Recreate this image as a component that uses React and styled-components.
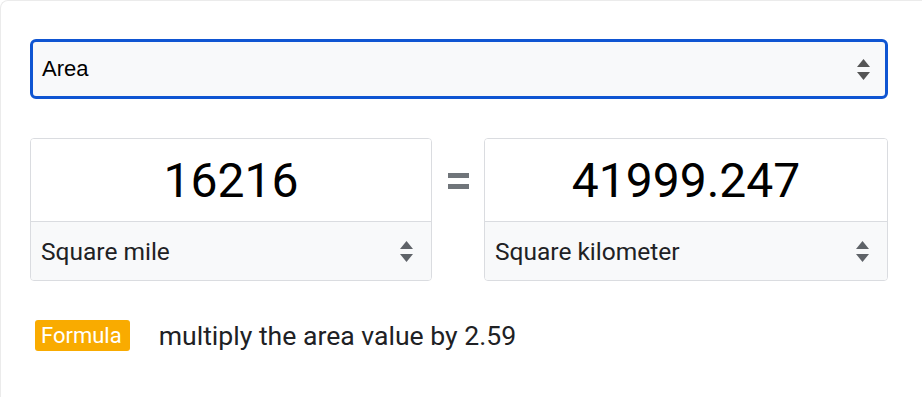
import React from 'react'
import styled, { createGlobalStyle } from 'styled-components'

const GlobalStyle = createGlobalStyle`
  body {
    margin: 0;
    background: #fff;
    font-family: Roboto, "Liberation Sans", Arial, sans-serif;
  }
`;

const Card = styled.div`
  box-sizing: border-box;
  width: 100%;
  height: 397px;
  border: 1px solid #ebebeb;
  border-right: none;
  border-bottom: none;
  border-top-left-radius: 8px;
  padding: 38px 34px 0 29px;
  display: flex;
  flex-direction: column;
  gap: 39px;
`;

const TypeSelect = styled.div`
  box-sizing: border-box;
  height: 60px;
  border: 3px solid #0f55d2;
  border-radius: 6px;
  background: #f8f9fa;
  display: flex;
  align-items: center;
  justify-content: space-between;
  padding: 0 15px 0 9px;
  font-family: "Liberation Sans", Arial, sans-serif;
  font-size: 22px;
  color: #000;
`;

const Converter = styled.div`
  display: grid;
  grid-template-columns: 402px 1fr 404px;
  align-items: start;
`;

const UnitCard = styled.div`
  box-sizing: border-box;
  height: 143px;
  border: 1px solid #dadce0;
  border-radius: 4px;
  display: flex;
  flex-direction: column;
  overflow: hidden;
`;

const Value = styled.div`
  height: 82px;
  display: flex;
  align-items: center;
  justify-content: center;
  font-size: 48px;
  color: #000;
  background: #fff;
`;

const UnitSelect = styled.div`
  flex: 1;
  border-top: 1px solid #dadce0;
  background: #f8f9fa;
  display: flex;
  align-items: center;
  justify-content: space-between;
  padding: 0 18px 0 10px;
  font-size: 24.5px;
  color: #202124;
`;

const EqualsCell = styled.div`
  height: 83px;
  display: flex;
  align-items: center;
  justify-content: center;
`;

const Equals = styled.div`
  box-sizing: border-box;
  width: 21px;
  height: 16px;
  border-top: 5px solid #70757a;
  border-bottom: 5px solid #70757a;
  margin-top: 2px;
`;

const FormulaRow = styled.div`
  display: flex;
  align-items: center;
  gap: 29px;
  padding-left: 5px;
`;

const Badge = styled.span`
  box-sizing: border-box;
  height: 31px;
  padding: 0 8px 0 6px;
  display: flex;
  align-items: center;
  background: #f9ab00;
  color: #fff;
  border-radius: 3px;
  font-size: 22px;
`;

const FormulaText = styled.span`
  font-size: 26.6px;
  color: #202124;
`;

const Arrows = ({ color = '#5f6368' }) => (
  <svg width="13" height="21" viewBox="0 0 13 21">
    <polygon points="6.5,0 13,8 0,8" fill={color} />
    <polygon points="0,13 13,13 6.5,21" fill={color} />
  </svg>
);

const App = () => {
  return (
    <>
      <GlobalStyle />
      <Card>
        <TypeSelect>
          <span>Area</span>
          <Arrows color="#555" />
        </TypeSelect>

        <Converter>
          <UnitCard>
            <Value>16216</Value>
            <UnitSelect>
              <span>Square mile</span>
              <Arrows />
            </UnitSelect>
          </UnitCard>
          <EqualsCell>
            <Equals />
          </EqualsCell>
          <UnitCard>
            <Value>41999.247</Value>
            <UnitSelect>
              <span>Square kilometer</span>
              <Arrows />
            </UnitSelect>
          </UnitCard>
        </Converter>

        <FormulaRow>
          <Badge>Formula</Badge>
          <FormulaText>multiply the area value by 2.59</FormulaText>
        </FormulaRow>
      </Card>
    </>
  )
}

export default App
